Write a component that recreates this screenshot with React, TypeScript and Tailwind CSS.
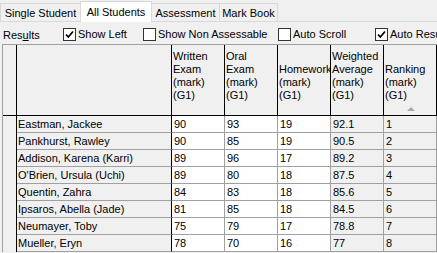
import React from 'react';

const headers: string[][] = [
    ['Written', 'Exam', '(mark)', '(G1)'],
    ['Oral', 'Exam', '(mark)', '(G1)'],
    ['Homework', '(mark)', '(G1)'],
    ['Weighted', 'Average', '(mark)', '(G1)'],
    ['Ranking', '(mark)', '(G1)'],
];

const rows: string[][] = [
    ['Eastman, Jackee', '90', '93', '19', '92.1', '1'],
    ['Pankhurst, Rawley', '90', '85', '19', '90.5', '2'],
    ['Addison, Karena (Karri)', '89', '96', '17', '89.2', '3'],
    ["O'Brien, Ursula (Uchi)", '89', '80', '18', '87.5', '4'],
    ['Quentin, Zahra', '84', '83', '18', '85.6', '5'],
    ['Ipsaros, Abella (Jade)', '81', '85', '18', '84.5', '6'],
    ['Neumayer, Toby', '75', '79', '17', '78.8', '7'],
    ['Mueller, Eryn', '78', '70', '16', '77', '8'],
];

// editable columns are white, computed ones stay grey
const editable = [true, true, true, false, false];

const CheckBox: React.FC<{ checked?: boolean; label: string; width: string }> = ({ checked, label, width }) => (
    <div className={`flex items-center gap-[2px] whitespace-nowrap shrink-0 ${width}`}>
        <div className="w-[13px] h-[13px] border border-[#333333] bg-white flex items-center justify-center shrink-0">
            {checked && (
                <svg width="11" height="11" viewBox="0 0 11 11">
                    <path d="M2 5.5 L4.3 8 L9 2.5" fill="none" stroke="#000" strokeWidth="1.7" />
                </svg>
            )}
        </div>
        <span>{label}</span>
    </div>
);

const App: React.FC = () => {
    return (
        <div className="w-[437px] h-[253px] overflow-hidden bg-[#f0f0f0] text-black text-[11px] leading-[13px] font-['Liberation_Sans',Arial,sans-serif]">
            {/* tabs */}
            <div className="flex items-end h-[22px] border-b border-[#d9d9d9]">
                <div className="w-[80px] h-[18px] flex items-center justify-center pt-[2px] border-l border-t border-[#d9d9d9] bg-[#f0f0f0]">Single Student</div>
                <div className="w-[72px] h-[21px] -mb-px flex items-center justify-center border-l border-t border-r border-[#d9d9d9] bg-white">All Students</div>
                <div className="w-[68px] h-[18px] flex items-center justify-center pt-[2px] border-t border-r border-[#d9d9d9] bg-[#f0f0f0]">Assessment</div>
                <div className="w-[58px] h-[18px] flex items-center justify-center pt-[2px] border-t border-r border-[#d9d9d9] bg-[#f0f0f0]">Mark Book</div>
            </div>

            {/* toolbar */}
            <div className="flex items-center h-[22px] pt-[2px] overflow-hidden">
                <div className="w-[63px] shrink-0 pl-[3px] pt-[2px]">Res<span className="underline">u</span>lts</div>
                <CheckBox checked label="Show Left" width="w-[80px]" />
                <CheckBox label="Show Non Assessable" width="w-[135px]" />
                <CheckBox label="Auto Scroll" width="w-[97px]" />
                <CheckBox checked label="Auto Results" width="w-[80px]" />
            </div>

            {/* grid */}
            <div className="ml-[2px] border-l border-t border-[#a0a0a0] grid grid-cols-[14px_155px_53px_53px_53px_53px_53px]">
                <div className="h-[71px] border-r border-b border-black bg-[#f0f0f0]" />
                <div className="h-[71px] border-r border-b border-black bg-[#f0f0f0]" />
                {headers.map((lines, i) => (
                    <div key={i} className="h-[71px] border-r border-b border-black bg-[#f0f0f0] flex flex-col justify-end pb-[4px] pl-[1px] whitespace-nowrap">
                        {lines.map((l, j) => (
                            <div key={j} className="h-[13px]">{l}</div>
                        ))}
                        <div className="h-[9px] flex justify-center items-end">
                            {i === 4 && (
                                <svg width="8" height="4" viewBox="0 0 8 4">
                                    <polygon points="0,4 4,0 8,4" fill="#a8a8a8" />
                                </svg>
                            )}
                        </div>
                    </div>
                ))}

                {rows.map((r) => (
                    <React.Fragment key={r[0]}>
                        <div className="h-[17px] border-r border-black bg-[#f0f0f0]" />
                        <div className="h-[17px] border-r border-r-black border-b border-b-[#a0a0a0] bg-[#f0f0f0] flex items-center pl-[1px] whitespace-nowrap">{r[0]}</div>
                        {r.slice(1).map((v, k) => (
                            <div
                                key={k}
                                className={`h-[17px] border-r border-b border-[#a0a0a0] flex items-center pl-[2px] ${editable[k] ? 'bg-white' : 'bg-[#f0f0f0]'}`}
                            >
                                {v}
                            </div>
                        ))}
                    </React.Fragment>
                ))}
            </div>
        </div>
    );
};

export default App;
